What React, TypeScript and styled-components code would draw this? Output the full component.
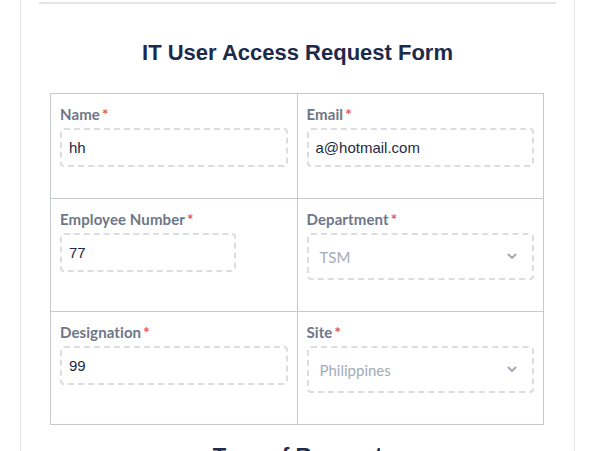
import React from "react";
import styled, { createGlobalStyle } from "styled-components";

const Global = createGlobalStyle`
  html, body { margin: 0; padding: 0; background: #ffffff; }
  body { overflow: hidden; }
  * { box-sizing: border-box; }
`;

const Page = styled.div`
  width: 605px;
  height: 451px;
  overflow: hidden;
  background: #ffffff;
`;

const Card = styled.div`
  margin-left: 20px;
  width: 555px;
  min-height: 500px;
  border-left: 1px solid #e6e6ee;
  border-right: 1px solid #e6e6ee;
  padding: 2px 18px 0 18px;
`;

const Rule = styled.div`
  height: 2px;
  background: #e2e1ec;
`;

const Title = styled.h2`
  margin: 36px 0 0 0;
  text-align: center;
  font-family: "Liberation Sans", Arial, sans-serif;
  font-weight: 700;
  font-size: 22px;
  line-height: 26px;
  color: #1c2a4b;
`;

const Table = styled.div`
  margin: 27px 12px 0 11px;
  display: grid;
  grid-template-columns: 1fr 1fr;
  border-top: 1px solid #c6c8d2;
  border-left: 1px solid #c6c8d2;
`;

const Cell = styled.div`
  border-right: 1px solid #c6c8d2;
  border-bottom: 1px solid #c6c8d2;
  padding: 10px 9px 31px 9px;
  display: flex;
  flex-direction: column;
`;

const Label = styled.label`
  font-family: Lato, "Noto Sans", sans-serif;
  font-weight: 700;
  font-size: 15px;
  line-height: 20px;
  letter-spacing: 0.1px;
  color: #6e7689;
  margin-bottom: 4px;
`;

const Star = styled.span`
  color: #e5534b;
  margin-left: 2px;
`;

const Input = styled.div<{ $width?: string }>`
  width: ${(p) => p.$width ?? "100%"};
  height: 39px;
  border: 2px dashed #dcdde3;
  border-radius: 4px;
  padding: 0 7px;
  display: flex;
  align-items: center;
  font-family: "Liberation Sans", Arial, sans-serif;
  font-size: 15px;
  color: #1f2a44;
`;

const Select = styled.div`
  width: 100%;
  height: 47px;
  border: 2px dashed #dcdde3;
  border-radius: 4px;
  padding: 0 15px 0 11px;
  display: flex;
  align-items: center;
  justify-content: space-between;
  font-family: Lato, "Noto Sans", sans-serif;
  font-size: 15px;
  color: #a4abb8;
`;

const Chevron = () => (
  <svg width="10" height="7" viewBox="0 0 10 7">
    <path d="M1.5 1.5 L5 5 L8.5 1.5" fill="none" stroke="#a4abb8" strokeWidth="2" strokeLinecap="round" strokeLinejoin="round" />
  </svg>
);

const SubTitle = styled(Title)`
  margin-top: 18px;
`;

type Field = { label: string; value: string; kind: "input" | "select"; width?: string };

const fields: Field[] = [
  { label: "Name", value: "hh", kind: "input" },
  { label: "Email", value: "a@hotmail.com", kind: "input" },
  { label: "Employee Number", value: "77", kind: "input", width: "176px" },
  { label: "Department", value: "TSM", kind: "select" },
  { label: "Designation", value: "99", kind: "input" },
  { label: "Site", value: "Philippines", kind: "select" },
];

export default function App() {
  return (
    <Page>
      <Global />
      <Card>
        <Rule />
        <Title>IT User Access Request Form</Title>
        <Table>
          {fields.map((f) => (
            <Cell key={f.label}>
              <Label>
                {f.label}
                <Star>*</Star>
              </Label>
              {f.kind === "input" ? (
                <Input $width={f.width}>{f.value}</Input>
              ) : (
                <Select>
                  <span>{f.value}</span>
                  <Chevron />
                </Select>
              )}
            </Cell>
          ))}
        </Table>
        <SubTitle>Type of Request</SubTitle>
      </Card>
    </Page>
  );
}
